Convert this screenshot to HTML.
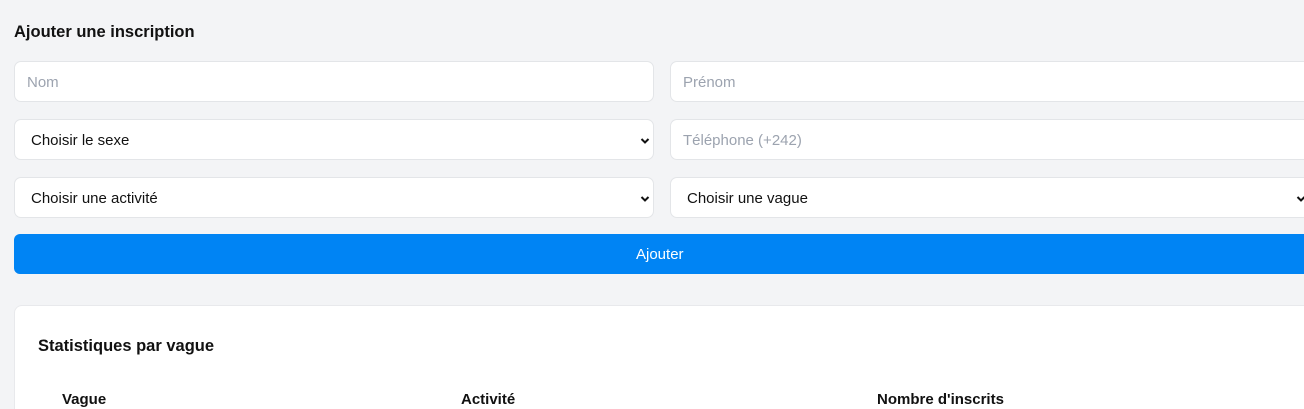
<!DOCTYPE html>
<html><head><style>
html,body{margin:0;width:1304px;height:409px;overflow:hidden}
body{background:#f3f4f6;font-family:"Liberation Sans",sans-serif;position:relative}
.a{position:absolute}
h1{position:absolute;left:14px;top:23px;margin:0;font-size:16.5px;font-weight:bold;color:#111}
.box{position:absolute;width:640px;height:41px;background:#fff;border:1px solid #e3e5e8;border-radius:7px;box-sizing:border-box;font-size:15px;line-height:42px}
.ph{color:#9ca3af;padding-left:12px}
.sel{color:#111;padding-left:16px}
.chev{position:absolute;right:3px;top:17px}
.btn{position:absolute;left:14px;top:234px;width:1290px;height:40px;background:#0084f4;border-radius:6px 0 0 6px;color:#fff;font-size:15px;line-height:42px}
.card{position:absolute;left:14px;top:305px;width:1290px;height:104px;box-sizing:border-box;background:#fff;border:1px solid #e8e9ec;border-right:0;border-bottom:0;border-radius:8px 0 0 0}
</style></head><body>
<h1>Ajouter une inscription</h1>
<div class="box ph" style="left:14px;top:61px">Nom</div>
<div class="box ph" style="left:670px;top:61px;width:634px;border-right:0;border-radius:7px 0 0 7px">Prénom</div>
<div class="box sel" style="left:14px;top:119px">Choisir le sexe<svg class="chev" width="10" height="8" viewBox="0 0 10 8"><path d="M1.5 2l3.5 3.5L8.5 2" stroke="#111" stroke-width="2" fill="none"/></svg></div>
<div class="box ph" style="left:670px;top:119px;width:634px;border-right:0;border-radius:7px 0 0 7px">Téléphone (+242)</div>
<div class="box sel" style="left:14px;top:177px">Choisir une activité<svg class="chev" width="10" height="8" viewBox="0 0 10 8"><path d="M1.5 2l3.5 3.5L8.5 2" stroke="#111" stroke-width="2" fill="none"/></svg></div>
<div class="box sel" style="left:670px;top:177px;width:640px">Choisir une vague<svg class="chev" width="10" height="8" viewBox="0 0 10 8"><path d="M1.5 2l3.5 3.5L8.5 2" stroke="#111" stroke-width="2" fill="none"/></svg></div>
<div class="btn"><span class="a" style="left:622px">Ajouter</span></div>
<div class="card"></div>
<div class="a" style="left:38px;top:337px;font-size:16.5px;font-weight:bold;color:#111">Statistiques par vague</div>
<div class="a" style="left:62px;top:391px;font-size:15px;font-weight:bold;color:#111;line-height:18px">Vague</div>
<div class="a" style="left:461px;top:391px;font-size:15px;font-weight:bold;color:#111;line-height:18px">Activité</div>
<div class="a" style="left:877px;top:391px;font-size:15px;font-weight:bold;color:#111;line-height:18px">Nombre d'inscrits</div>
</body></html>
